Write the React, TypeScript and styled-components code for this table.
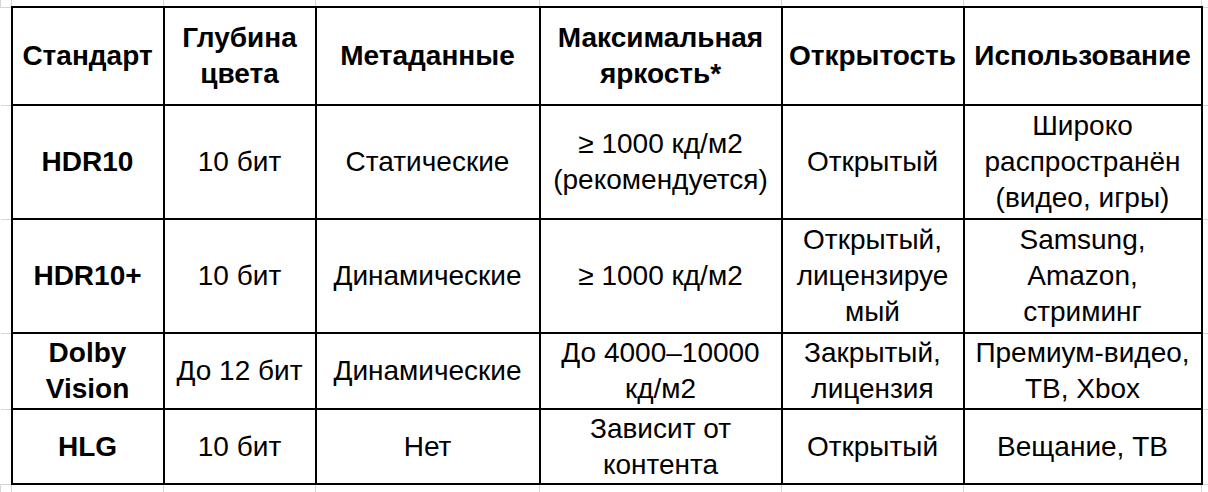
import React from "react";
import styled, { createGlobalStyle } from "styled-components";

const GlobalStyle = createGlobalStyle`
  html,
  body {
    margin: 0;
    padding: 0;
    background: #ffffff;
    overflow: hidden;
  }
`;

const Sheet = styled.table`
  border-collapse: collapse;
  table-layout: fixed;
  width: 1208px;
  font-family: "Liberation Sans", Arial, sans-serif;
  color: #000000;
`;

const SheetRow = styled.tr<{ $h: number }>`
  height: ${(p) => p.$h}px;
`;

const Gutter = styled.td<{ $edge?: "top" | "bottom" | "left" | "right" }>`
  padding: 0;
  border: 1px solid #d6d6d6;
  ${(p) => (p.$edge ? `border-${p.$edge}: none;` : "")}
`;

const Cell = styled.td<{ $bold?: boolean }>`
  border: 2px solid #000000;
  padding: 0 2px;
  text-align: center;
  vertical-align: middle;
  white-space: nowrap;
  font-size: 28px;
  line-height: 36px;
  font-weight: ${(p) => (p.$bold ? 700 : 400)};
`;

const HeadCell = styled(Cell).attrs({ as: "th" })``;

const columns = [152, 152, 224, 242, 182, 238];

const header: string[][] = [
  ["Стандарт"],
  ["Глубина", "цвета"],
  ["Метаданные"],
  ["Максимальная", "яркость*"],
  ["Открытость"],
  ["Использование"],
];

type Row = { height: number; cells: string[][] };

const rows: Row[] = [
  {
    height: 114,
    cells: [
      ["HDR10"],
      ["10 бит"],
      ["Статические"],
      ["≥ 1000 кд/м2", "(рекомендуется)"],
      ["Открытый"],
      ["Широко", "распространён", "(видео, игры)"],
    ],
  },
  {
    height: 114,
    cells: [
      ["HDR10+"],
      ["10 бит"],
      ["Динамические"],
      ["≥ 1000 кд/м2"],
      ["Открытый,", "лицензируе", "мый"],
      ["Samsung,", "Amazon,", "стриминг"],
    ],
  },
  {
    height: 76,
    cells: [
      ["Dolby", "Vision"],
      ["До 12 бит"],
      ["Динамические"],
      ["До 4000–10000", "кд/м2"],
      ["Закрытый,", "лицензия"],
      ["Премиум-видео,", "ТВ, Xbox"],
    ],
  },
  {
    height: 75,
    cells: [
      ["HLG"],
      ["10 бит"],
      ["Нет"],
      ["Зависит от", "контента"],
      ["Открытый"],
      ["Вещание, ТВ"],
    ],
  },
];

function Lines({ lines }: { lines: string[] }) {
  return (
    <>
      {lines.map((line, i) => (
        <React.Fragment key={i}>
          {i > 0 && <br />}
          {line}
        </React.Fragment>
      ))}
    </>
  );
}

function EdgeRow({ h, edge }: { h: number; edge: "top" | "bottom" }) {
  return (
    <SheetRow $h={h}>
      <Gutter $edge={edge} />
      {columns.map((_, i) => (
        <Gutter key={i} $edge={edge} />
      ))}
      <Gutter $edge={edge} />
    </SheetRow>
  );
}

export default function App(): React.ReactElement {
  return (
    <>
      <GlobalStyle />
      <Sheet>
        <colgroup>
          <col style={{ width: 11 }} />
          {columns.map((w, i) => (
            <col key={i} style={{ width: w }} />
          ))}
          <col style={{ width: 7 }} />
        </colgroup>
        <tbody>
          <EdgeRow h={7} edge="top" />
          <SheetRow $h={98}>
            <Gutter $edge="left" />
            {header.map((lines, i) => (
              <HeadCell key={i} $bold>
                <Lines lines={lines} />
              </HeadCell>
            ))}
            <Gutter $edge="right" />
          </SheetRow>
          {rows.map((row, r) => (
            <SheetRow key={r} $h={row.height}>
              <Gutter $edge="left" />
              {row.cells.map((lines, i) => (
                <Cell key={i} $bold={i === 0}>
                  <Lines lines={lines} />
                </Cell>
              ))}
              <Gutter $edge="right" />
            </SheetRow>
          ))}
          <EdgeRow h={8} edge="bottom" />
        </tbody>
      </Sheet>
    </>
  );
}
